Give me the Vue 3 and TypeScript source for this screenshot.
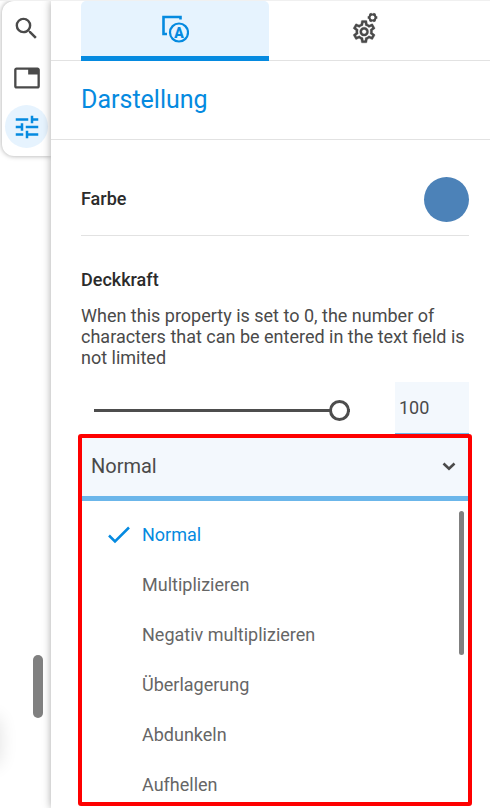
<script setup lang="ts">
import { ref } from 'vue'

const modes: string[] = [
  'Normal',
  'Multiplizieren',
  'Negativ multiplizieren',
  'Überlagerung',
  'Abdunkeln',
  'Aufhellen',
]
const mode = ref('Normal')
const opacity = ref(100)
const activeTab = ref(0)
</script>

<template>
  <div class="app">
    <aside class="rail">
      <nav class="tools" aria-label="Werkzeuge">
        <button class="tool" type="button" aria-label="Suchen">
          <svg viewBox="0 0 24 24" width="29" height="29"><path d="M15.5 14h-.79l-.28-.27A6.47 6.47 0 0 0 16 9.500 6.500 6.500 0 1 0 9.500 16c1.610 0 3.090-.59 4.230-1.570l.27.28v.79l5 4.990L20.490 19l-4.990-5zm-6 0C7.010 14 5 11.990 5 9.500S7.010 5 9.500 5 14 7.010 14 9.500 11.990 14 9.500 14z" /></svg>
        </button>
        <button class="tool" type="button" aria-label="Reiter">
          <svg viewBox="0 0 24 24" width="28" height="28"><path d="M21 3H3c-1.100 0-2 .9-2 2v14c0 1.100.9 2 2 2h18c1.100 0 2-.9 2-2V5c0-1.100-.9-2-2-2zm0 16H3V5h10v4h8v10z" /></svg>
        </button>
        <button class="tool selected" type="button" aria-label="Eigenschaften">
          <svg viewBox="0 0 24 24" width="30" height="30"><path d="M3 17v2h6v-2H3zM3 5v2h10V5H3zm10 16v-2h8v-2h-8v-2h-2v6h2zM7 9v2H3v2h4v2h2V9H7zm14 4v-2H11v2h10zm-6-4h2V7h4V5h-4V3h-2v6z" /></svg>
        </button>
      </nav>
      <div class="rail-thumb"></div>
      <div class="glow"></div>
    </aside>

    <main class="panel">
      <div class="tabs" role="tablist">
        <button class="tab" :class="{ active: activeTab === 0 }" type="button" role="tab" aria-label="Darstellung" :aria-selected="activeTab === 0" @click="activeTab = 0">
          <svg viewBox="0 0 28 28" width="28" height="28">
            <path d="M19.500 4.500V2H2.500V19H6" fill="none" stroke="currentColor" stroke-width="2.600" />
            <circle cx="18" cy="17.500" r="9" fill="none" stroke="currentColor" stroke-width="2.200" />
            <text x="18" y="22.500" text-anchor="middle" class="glyph">A</text>
          </svg>
        </button>
        <button class="tab" :class="{ active: activeTab === 1 }" type="button" role="tab" aria-label="Einstellungen" :aria-selected="activeTab === 1" @click="activeTab = 1">
          <svg viewBox="0 0 30 34" width="30" height="34">
            <g transform="translate(2.700 6.200) scale(1.120)">
              <path stroke="currentColor" stroke-width="0.300" d="M19.430 12.980c.04-.32.07-.64.07-.98s-.03-.66-.07-.98l2.110-1.650c.19-.15.24-.42.12-.64l-2-3.460c-.09-.16-.26-.25-.44-.25-.06 0-.12.01-.17.03l-2.490 1c-.52-.4-1.080-.73-1.690-.98l-.38-2.650C14.460 2.180 14.250 2 14 2h-4c-.25 0-.46.18-.49.42l-.38 2.650c-.61.25-1.170.59-1.690.98l-2.490-1c-.06-.02-.12-.03-.18-.03-.17 0-.34.09-.43.25l-2 3.460c-.13.22-.07.49.12.64l2.110 1.650c-.04.32-.07.65-.07.98s.03.66.07.98l-2.110 1.650c-.19.15-.24.42-.12.64l2 3.460c.09.16.26.25.44.25.06 0 .12-.01.17-.03l2.490-1c.52.4 1.080.73 1.690.98l.38 2.650c.03.24.24.42.49.42h4c.25 0 .46-.18.49-.42l.38-2.650c.61-.25 1.170-.59 1.690-.98l2.490 1c.06.02.12.03.18.03.17 0 .34-.09.43-.25l2-3.460c.12-.22.07-.49-.12-.64l-2.110-1.650zm-1.980-1.710c.04.31.05.52.05.73 0 .21-.02.43-.05.73l-.14 1.130.89.7 1.080.84-.7 1.210-1.270-.51-1.040-.42-.9.68c-.43.32-.84.56-1.250.73l-1.060.43-.16 1.130-.2 1.350h-1.400l-.19-1.350-.16-1.130-1.060-.43c-.43-.18-.83-.41-1.230-.71l-.91-.7-1.060.43-1.270.51-.7-1.210 1.080-.84.89-.7-.14-1.130c-.03-.31-.05-.54-.05-.74s.02-.43.05-.73l.14-1.130-.89-.7-1.080-.84.7-1.210 1.270.51 1.040.42.9-.68c.43-.32.84-.56 1.250-.73l1.060-.43.16-1.130.2-1.350h1.390l.19 1.350.16 1.130 1.060.43c.43.18.83.41 1.230.71l.91.7 1.060-.43 1.270-.51.7 1.210-1.070.85-.89.7.14 1.130zM12 8c-2.210 0-4 1.790-4 4s1.790 4 4 4 4-1.790 4-4-1.790-4-4-4zm0 6c-1.100 0-2-.9-2-2s.9-2 2-2 2 .9 2 2-.9 2-2 2z" />
            </g>
            <circle cx="24.500" cy="5.500" r="3" fill="none" stroke="currentColor" stroke-width="2" />
            <path d="M27.500 5.500H29.300M26 8.100L26.900 9.700M23 8.100L22.100 9.700M21.500 5.500H19.700M23 2.900L22.100 1.300M26 2.900L26.900 1.300" fill="none" stroke="currentColor" stroke-width="2.600" />
          </svg>
        </button>
      </div>

      <h1 class="title">Darstellung</h1>

      <div class="body">
        <div class="color-row">
          <span id="color-label" class="label">Farbe</span>
          <button class="swatch" type="button" aria-labelledby="color-label"></button>
        </div>

        <label class="label opacity-label" for="opacity">Deckkraft</label>
        <p class="hint">When this property is set to 0, the number of characters that can be entered in the text field is not limited</p>

        <div class="opacity-row">
          <input id="opacity" v-model.number="opacity" class="slider" type="range" min="0" max="100" />
          <input v-model.number="opacity" class="amount" type="text" inputmode="numeric" aria-label="Deckkraft" />
        </div>

        <div class="dropdown">
          <div class="select-box">
            <select v-model="mode" class="select" aria-label="Modus">
              <option v-for="m in modes" :key="m" :value="m">{{ m }}</option>
            </select>
            <svg class="chevron" viewBox="0 0 14 9" width="14" height="9"><path d="M1.500 1.500L7 6.800L12.500 1.500" fill="none" stroke="currentColor" stroke-width="2.600" /></svg>
          </div>
          <ul class="list">
            <li v-for="m in modes" :key="m">
              <button class="option" :class="{ chosen: m === mode }" type="button" @click="mode = m">
                <span class="mark">
                  <svg v-if="m === mode" viewBox="0 0 22 20" width="22" height="20"><path d="M1 11.500L7 17.500L21 3.500" fill="none" stroke="currentColor" stroke-width="2.500" /></svg>
                </span>
                {{ m }}
              </button>
            </li>
          </ul>
          <div class="list-thumb"></div>
        </div>
      </div>
    </main>
  </div>
</template>

<style>
body {
  background: #fff;
}
</style>

<style scoped>
* {
  box-sizing: border-box;
}

.app {
  display: grid;
  grid-template-columns: 51px minmax(0, 1fr);
  height: 100vh;
  border-top: 1px solid #f0f0f0;
  overflow: hidden;
  font-family: Roboto, "Liberation Sans", sans-serif;
  font-size: 18px;
  color: #4a4a4a;
}

button,
input,
select {
  margin: 0;
  padding: 0;
  border: 0;
  background: none;
  color: inherit;
  font: inherit;
}

svg {
  display: block;
  fill: currentColor;
}

.rail {
  position: relative;
  padding-left: 2px;
}

.tools {
  display: flex;
  flex-direction: column;
  align-items: center;
  gap: 6px;
  padding: 6px 0 8px;
  border-radius: 12px 0 0 12px;
  box-shadow: 0 0 5px rgba(0, 0, 0, 0.35);
}

.tool {
  display: grid;
  place-items: center;
  width: 43px;
  height: 43px;
  border-radius: 50%;
}

.tool.selected {
  background: #e6f3fe;
  color: #058ae0;
}

.rail-thumb {
  position: absolute;
  right: 8px;
  bottom: 90px;
  width: 10px;
  height: 63px;
  border-radius: 5px;
  background: #808080;
}

.glow {
  position: absolute;
  left: -20px;
  bottom: 42px;
  width: 20px;
  height: 50px;
  border-radius: 10px;
  box-shadow: 0 0 18px rgba(0, 0, 0, 0.12);
}

.panel {
  display: flex;
  flex-direction: column;
  min-height: 0;
  position: relative;
  background: #fff;
  box-shadow: 0 0 8px rgba(0, 0, 0, 0.35);
}

.tabs {
  display: grid;
  grid-template-columns: 1fr 1fr;
  flex: none;
  height: 60px;
  padding: 0 33px 0 30px;
  box-shadow: inset 0 -1px #e2e2e2;
}

.tab {
  display: grid;
  place-items: center;
  border-bottom: 5px solid transparent;
}

.tab.active {
  border-bottom-color: #058ae0;
  border-radius: 5px 5px 0 0;
  background: #e6f3fe;
  color: #058ae0;
}

.glyph {
  font-family: Roboto, sans-serif;
  font-size: 14px;
  font-weight: 900;
}

.title {
  flex: none;
  height: 79px;
  margin: 0;
  padding: 0 30px;
  border-bottom: 1px solid #e2e2e2;
  color: #058ae0;
  font-size: 25px;
  font-weight: 400;
  line-height: 78px;
}

.body {
  display: flex;
  flex: 1;
  flex-direction: column;
  min-height: 0;
  padding: 37px 21px 2px 30px;
}

.color-row {
  display: flex;
  flex: none;
  align-items: flex-start;
  justify-content: space-between;
  height: 59px;
  border-bottom: 1px solid #e2e2e2;
}

.label {
  color: #2b2b2b;
  font-weight: 500;
  line-height: 24px;
}

.color-row .label {
  line-height: 44px;
}

.swatch {
  width: 45px;
  height: 45px;
  border-radius: 50%;
  background: #4c82b8;
}

.opacity-label {
  margin-top: 32px;
}

.hint {
  margin: 13px 0 14px;
  line-height: 21px;
}

.opacity-row {
  display: flex;
  flex: none;
  align-items: flex-end;
  justify-content: space-between;
  height: 52px;
  padding-left: 13px;
}

.slider {
  flex: 1;
  height: 48px;
  margin-right: 45px;
  appearance: none;
}

.slider::-webkit-slider-runnable-track {
  height: 3px;
  background: #4d4d4d;
}

.slider::-webkit-slider-thumb {
  width: 21px;
  height: 21px;
  margin-top: -9px;
  border: 3px solid #4d4d4d;
  border-radius: 50%;
  background: #fff;
  appearance: none;
}

.amount {
  width: 74px;
  height: 52px;
  padding: 0 4px;
  border-bottom: 1px solid #6bb6ea;
  background: #f3f8fd;
}

.dropdown {
  display: flex;
  flex: 1;
  flex-direction: column;
  position: relative;
  min-height: 0;
  margin: 0 -3px;
  border: 4px solid #fe0000;
  border-radius: 3px;
}

.select-box {
  flex: none;
  position: relative;
  height: 63px;
  border-bottom: 5px solid #6bb6ea;
  background: #f3f8fd;
}

.select {
  width: 100%;
  height: 100%;
  padding: 0 40px 2px 9px;
  appearance: none;
  font-size: 20px;
}

.chevron {
  position: absolute;
  top: 24px;
  right: 12px;
  pointer-events: none;
}

.list {
  flex: 1;
  min-height: 0;
  margin: 0;
  padding: 8px 0 0;
  overflow: hidden;
  list-style: none;
}

.option {
  display: flex;
  align-items: center;
  width: 100%;
  height: 50px;
  padding-left: 26px;
  color: #666;
}

.option.chosen {
  color: #058ae0;
}

.mark {
  width: 34px;
}

.list-thumb {
  position: absolute;
  top: 73px;
  right: 4px;
  width: 5px;
  height: 144px;
  border-radius: 3px;
  background: #808080;
}
</style>
